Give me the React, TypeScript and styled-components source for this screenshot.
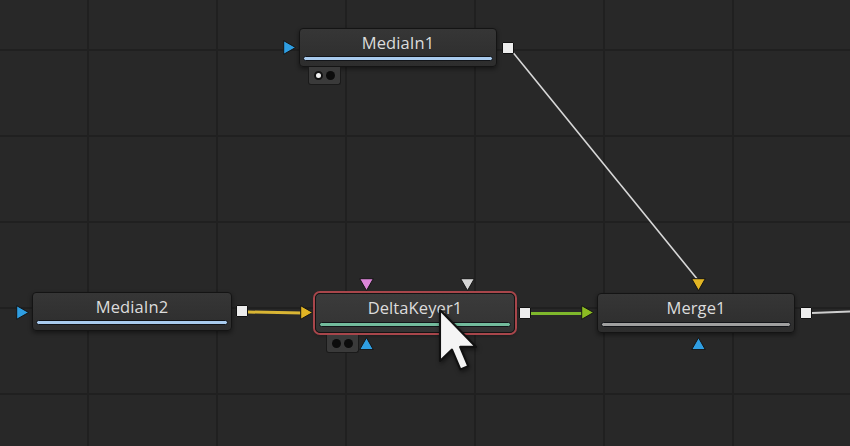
import React from "react";
import styled, { createGlobalStyle, css } from "styled-components";

const Global = createGlobalStyle`
  html, body { margin: 0; padding: 0; background: #282828; }
  #root { width: 850px; height: 446px; }
`;

const Canvas = styled.div`
  position: relative;
  width: 850px;
  height: 446px;
  overflow: hidden;
  background-color: #282828;
  background-image:
    linear-gradient(to right, #202020 2px, transparent 2px),
    linear-gradient(to bottom, #202020 2px, transparent 2px);
  background-size: 129px 86px;
  background-position: 87px 49px;
  font-family: "Open Sans", "Noto Sans", sans-serif;
`;

const Wires = styled.svg`
  position: absolute;
  left: 0;
  top: 0;
  width: 850px;
  height: 446px;
`;

const NodeBox = styled.div<{ $x: number; $y: number; $w: number; $h: number; $selected?: boolean }>`
  position: absolute;
  left: ${(p) => p.$x}px;
  top: ${(p) => p.$y}px;
  width: ${(p) => p.$w}px;
  height: ${(p) => p.$h}px;
  box-sizing: border-box;
  display: flex;
  flex-direction: column;
  justify-content: space-between;
  padding: 4px 3px 5px;
  border: 1px solid #141414;
  border-radius: 4px;
  background: linear-gradient(to bottom, #363636, #2d2d2d);
  box-shadow: 0 2px 4px rgba(0, 0, 0, 0.45);
  ${(p) =>
    p.$selected &&
    css`
      background: linear-gradient(to bottom, #3b3b3b, #333333);
      box-shadow: 0 0 0 2px #a8464b, 0 2px 4px rgba(0, 0, 0, 0.45);
      border-radius: 5px;
    `}
`;

const Label = styled.div`
  text-align: center;
  color: #dcdcdc;
  font-size: 16.5px;
  line-height: 20px;
  letter-spacing: 0.1px;
`;

const Bar = styled.div<{ $color: string }>`
  height: 5px;
  box-sizing: border-box;
  border: 1px solid #121418;
  border-radius: 3px;
  background: ${(p) => p.$color};
`;

const PortSlot = styled.div<{ $x: number; $y: number }>`
  position: absolute;
  left: ${(p) => p.$x}px;
  top: ${(p) => p.$y}px;
  display: flex;
  line-height: 0;
`;

const OutSquare = styled.div`
  width: 12px;
  height: 12px;
  box-sizing: border-box;
  background: #ececec;
  border: 1px solid #111;
  border-radius: 1px;
`;

const DotTab = styled.div<{ $x: number; $y: number }>`
  position: absolute;
  left: ${(p) => p.$x}px;
  top: ${(p) => p.$y}px;
  display: flex;
  gap: 3px;
  align-items: center;
  padding: 4px 5px 4px;
  background: #3a3a3a;
  border: 1px solid #1a1a1a;
  border-top: none;
  border-radius: 0 0 3px 3px;
`;

const Dot = styled.div<{ $on?: boolean }>`
  width: 9px;
  height: 9px;
  border-radius: 50%;
  box-sizing: border-box;
  background: ${(p) => (p.$on ? "#f2f2f2" : "#0c0c0c")};
  border: ${(p) => (p.$on ? "2px solid #111" : "none")};
`;

const CursorSvg = styled.svg`
  position: absolute;
  left: 437px;
  top: 307px;
  filter: drop-shadow(1px 2px 2px rgba(0, 0, 0, 0.5));
`;

type Dir = "right" | "down" | "up";

const Tri = ({ dir, color }: { dir: Dir; color: string }) => {
  const pts =
    dir === "right"
      ? "0.7,0.7 12.6,7.5 0.7,14.3"
      : dir === "down"
      ? "0.7,0.7 14.3,0.7 7.5,12.6"
      : "7.5,0.7 14.3,12.6 0.7,12.6";
  const w = dir === "right" ? 13.3 : 15;
  const h = dir === "right" ? 15 : 13.3;
  return (
    <svg width={w} height={h} viewBox={`0 0 ${w} ${h}`}>
      <polygon points={pts} fill={color} stroke="#141414" strokeWidth="1" strokeLinejoin="round" />
    </svg>
  );
};

type Port = { x: number; y: number; dir: Dir; color: string };

type NodeProps = {
  x: number;
  y: number;
  w: number;
  h: number;
  label: string;
  bar: string;
  selected?: boolean;
  inputs: Port[];
  out: { x: number; y: number };
  tab?: { x: number; y: number; dots: boolean[] };
};

const Node = ({ x, y, w, h, label, bar, selected, inputs, out, tab }: NodeProps) => (
  <NodeBox $x={x} $y={y} $w={w} $h={h} $selected={selected}>
    <Label>{label}</Label>
    <Bar $color={bar} />
    {inputs.map((p, i) => (
      <PortSlot key={i} $x={p.x} $y={p.y}>
        <Tri dir={p.dir} color={p.color} />
      </PortSlot>
    ))}
    <PortSlot $x={out.x} $y={out.y}>
      <OutSquare />
    </PortSlot>
    {tab && (
      <DotTab $x={tab.x} $y={tab.y}>
        {tab.dots.map((on, i) => (
          <Dot key={i} $on={on} />
        ))}
      </DotTab>
    )}
  </NodeBox>
);

const BLUE = "#2f9ee2";
const YELLOW = "#e2b524";
const GREEN = "#8cbc22";
const PINK = "#dc86d8";
const GREY = "#d6d6d6";

export default function App() {
  return (
    <>
      <Global />
      <Canvas>
        <Wires viewBox="0 0 850 446">
          <line x1="511" y1="50" x2="698" y2="280" stroke="#d8d8d8" strokeWidth="1.6" />
          <line x1="248" y1="312" x2="302" y2="313" stroke="#d9b534" strokeWidth="3" />
          <line x1="531" y1="313.5" x2="584" y2="313.5" stroke="#7fb82c" strokeWidth="3" />
          <line x1="812" y1="313" x2="850" y2="311.5" stroke="#cfcfcf" strokeWidth="2" />
        </Wires>

        <Node
          x={299}
          y={28}
          w={198}
          h={39}
          label="MediaIn1"
          bar="#a9cbee"
          inputs={[{ x: -17, y: 11, dir: "right", color: BLUE }]}
          out={{ x: 202, y: 13 }}
          tab={{ x: 8, y: 38, dots: [true, false] }}
        />

        <Node
          x={32}
          y={292}
          w={200}
          h={39}
          label="MediaIn2"
          bar="#a9cbee"
          inputs={[{ x: -17, y: 12, dir: "right", color: BLUE }]}
          out={{ x: 203, y: 12 }}
        />

        <Node
          x={315}
          y={293}
          w={200}
          h={40}
          label="DeltaKeyer1"
          bar="#72bb9c"
          selected
          inputs={[
            { x: -16, y: 11, dir: "right", color: YELLOW },
            { x: 43, y: -16, dir: "down", color: PINK },
            { x: 144, y: -16, dir: "down", color: GREY },
            { x: 43, y: 43, dir: "up", color: BLUE },
          ]}
          out={{ x: 203, y: 13 }}
          tab={{ x: 10, y: 41, dots: [false, false] }}
        />

        <Node
          x={597}
          y={293}
          w={198}
          h={40}
          label="Merge1"
          bar="#a0a0a0"
          inputs={[
            { x: -17, y: 11, dir: "right", color: GREEN },
            { x: 93, y: -16, dir: "down", color: YELLOW },
            { x: 93, y: 43, dir: "up", color: BLUE },
          ]}
          out={{ x: 202, y: 13 }}
        />

        <CursorSvg width="42" height="69" viewBox="-1 -1 14 23">
          <path
            d="M0 0 L0 17 L4 13.2 L6.8 19.8 L9.4 18.7 L6.7 12.3 L12 12.3 Z"
            fill="#f4f4f4"
            stroke="#111"
            strokeWidth="0.7"
            strokeLinejoin="round"
          />
        </CursorSvg>
      </Canvas>
    </>
  );
}
